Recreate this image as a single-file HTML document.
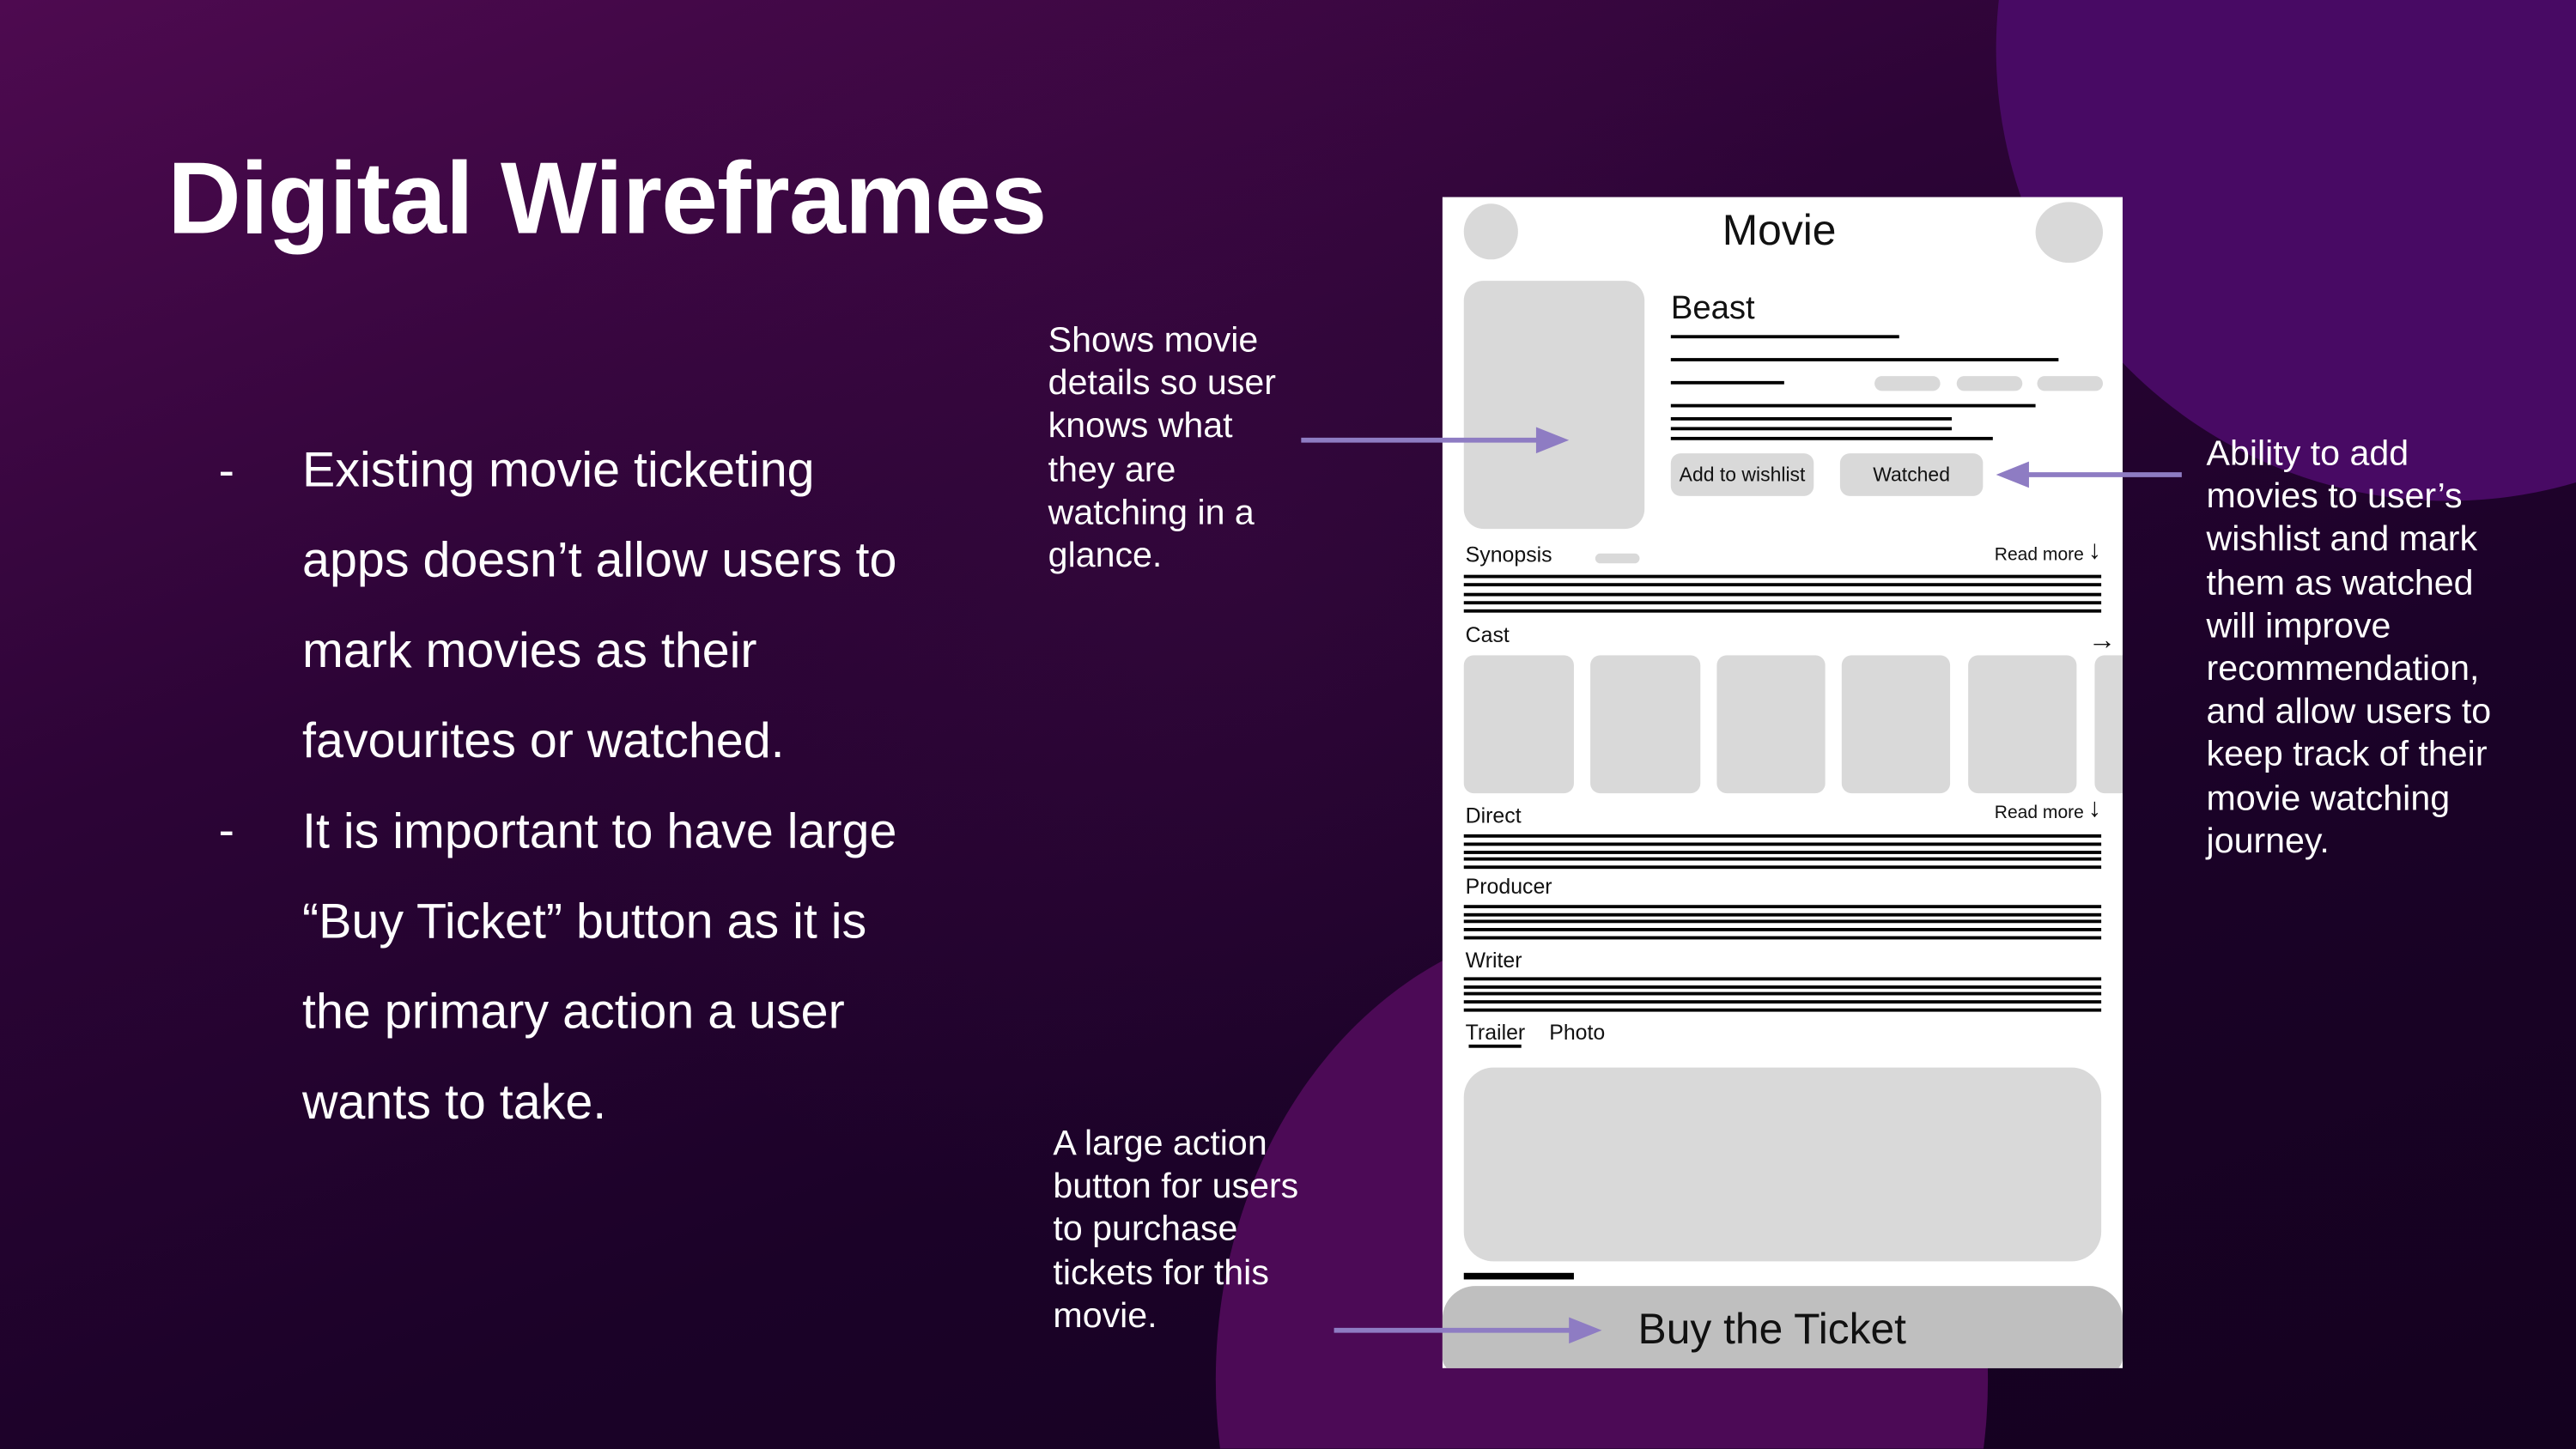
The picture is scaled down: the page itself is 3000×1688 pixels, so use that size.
<!DOCTYPE html>
<html><head><meta charset="utf-8"><style>
html,body{margin:0;padding:0;width:3000px;height:1688px;overflow:hidden;background:#1a0226}
#w{position:relative;width:3000px;height:1688px;overflow:hidden}
#s{position:absolute;left:0;top:0;width:1568px;height:882px;transform:scale(1.9133);transform-origin:0 0;overflow:hidden;
background:linear-gradient(160deg,#4e0a50 0%,#2c0436 35%,#1b0228 65%,#14011f 100%);font-family:"Liberation Sans",sans-serif;color:#fff}
.a{position:absolute}
.c{position:absolute;border-radius:50%}
.t{position:absolute;white-space:nowrap}
.ph{position:absolute;left:878px;top:120px;width:414px;height:713px;background:#fff;overflow:hidden;color:#111}
.ph .t{color:#111}
.g{position:absolute;background:#d9d9d9}
.l{position:absolute;height:1.6px;background:#000}
.note{position:absolute;font-size:21.5px;line-height:26.2px;color:#fff;white-space:nowrap}
.bl{position:absolute;font-size:30px;line-height:55px;color:#fff;white-space:nowrap}
</style></head><body><div id="w"><div id="s">
<div class="c" style="left:300px;top:-120px;width:900px;height:900px;background:radial-gradient(circle,rgba(90,20,90,0.18),rgba(0,0,0,0) 70%)"></div>
<div class="c" style="left:1215px;top:-245px;width:550px;height:550px;background:#480a64"></div>
<div class="c" style="left:740px;top:560px;width:470px;height:560px;background:#4c0a56"></div>

<div class="t" style="left:102px;top:84px;font-size:62px;font-weight:bold;letter-spacing:-0.5px;line-height:76px">Digital Wireframes</div>

<div class="t" style="left:133px;top:260px;font-size:29px;line-height:55px">-</div>
<div class="t" style="left:133px;top:479px;font-size:29px;line-height:55px">-</div>
<div class="bl" style="left:184px;top:259px;">Existing movie ticketing<br>apps doesn’t allow users to<br>mark movies as their<br>favourites or watched.<br>It is important to have large<br>“Buy Ticket” button as it is<br>the primary action a user<br>wants to take.</div>

<div class="note" style="left:638px;top:194px">Shows movie<br>details so user<br>knows what<br>they are<br>watching in a<br>glance.</div>
<div class="note" style="left:641px;top:683px">A large action<br>button for users<br>to purchase<br>tickets for this<br>movie.</div>
<div class="note" style="left:1343px;top:263px">Ability to add<br>movies to user’s<br>wishlist and mark<br>them as watched<br>will improve<br>recommendation,<br>and allow users to<br>keep track of their<br>movie watching<br>journey.</div>

<div class="ph">
 <div class="c" style="left:13px;top:4px;width:33px;height:34px;background:#d9d9d9"></div>
 <div class="c" style="left:361px;top:3px;width:41px;height:37px;background:#d9d9d9"></div>
 <div class="t" style="left:0;width:410px;text-align:center;top:3px;font-size:26px;line-height:34px">Movie</div>
 <div class="g" style="left:13px;top:51px;width:110px;height:151px;border-radius:12px"></div>
 <div class="t" style="left:139px;top:56px;font-size:20px;line-height:24px">Beast</div>
 <div class="l" style="left:139px;top:84px;width:139px"></div>
 <div class="l" style="left:139px;top:98px;width:236px"></div>
 <div class="l" style="left:139px;top:112px;width:69px"></div>
 <div class="g" style="left:263px;top:109px;width:40px;height:9px;border-radius:5px"></div>
 <div class="g" style="left:313px;top:109px;width:40px;height:9px;border-radius:5px"></div>
 <div class="g" style="left:362px;top:109px;width:40px;height:9px;border-radius:5px"></div>
 <div class="l" style="left:139px;top:126px;width:222px"></div>
 <div class="l" style="left:139px;top:134px;width:171px"></div>
 <div class="l" style="left:139px;top:140px;width:171px"></div>
 <div class="l" style="left:139px;top:146px;width:196px"></div>
 <div class="g" style="left:139px;top:156px;width:87px;height:26px;border-radius:6px"></div>
 <div class="t" style="left:139px;width:87px;text-align:center;top:162px;font-size:12px;line-height:14px">Add to wishlist</div>
 <div class="g" style="left:242px;top:156px;width:87px;height:26px;border-radius:6px"></div>
 <div class="t" style="left:242px;width:87px;text-align:center;top:162px;font-size:12px;line-height:14px">Watched</div>

 <div class="t" style="left:14px;top:210px;font-size:13px;line-height:16px">Synopsis</div>
 <div class="g" style="left:93px;top:217px;width:27px;height:6px;border-radius:3px"></div>
 <div class="t" style="left:336px;top:211px;font-size:11px;line-height:14px">Read more</div>
 <div class="t" style="left:393px;top:207px;font-size:16px;line-height:18px">↓</div>
 <div class="l" style="left:13px;top:230px;width:388px"></div>
 <div class="l" style="left:13px;top:235px;width:388px"></div>
 <div class="l" style="left:13px;top:241px;width:388px"></div>
 <div class="l" style="left:13px;top:246px;width:388px"></div>
 <div class="l" style="left:13px;top:251px;width:388px"></div>

 <div class="t" style="left:14px;top:259px;font-size:13px;line-height:16px">Cast</div>
 <div class="t" style="left:393px;top:261px;font-size:17px;line-height:18px">→</div>
 <div class="g" style="left:13px;top:279px;width:67px;height:84px;border-radius:6px"></div>
 <div class="g" style="left:90px;top:279px;width:67px;height:84px;border-radius:6px"></div>
 <div class="g" style="left:167px;top:279px;width:66px;height:84px;border-radius:6px"></div>
 <div class="g" style="left:243px;top:279px;width:66px;height:84px;border-radius:6px"></div>
 <div class="g" style="left:320px;top:279px;width:66px;height:84px;border-radius:6px"></div>
 <div class="g" style="left:397px;top:279px;width:30px;height:84px;border-radius:6px"></div>

 <div class="t" style="left:14px;top:369px;font-size:13px;line-height:16px">Direct</div>
 <div class="t" style="left:336px;top:368px;font-size:11px;line-height:14px">Read more</div>
 <div class="t" style="left:393px;top:364px;font-size:16px;line-height:18px">↓</div>
 <div class="l" style="left:13px;top:388px;width:388px"></div>
 <div class="l" style="left:13px;top:393px;width:388px"></div>
 <div class="l" style="left:13px;top:398px;width:388px"></div>
 <div class="l" style="left:13px;top:402px;width:388px"></div>
 <div class="l" style="left:13px;top:407px;width:388px"></div>

 <div class="t" style="left:14px;top:412px;font-size:13px;line-height:16px">Producer</div>
 <div class="l" style="left:13px;top:431px;width:388px"></div>
 <div class="l" style="left:13px;top:436px;width:388px"></div>
 <div class="l" style="left:13px;top:440px;width:388px"></div>
 <div class="l" style="left:13px;top:445px;width:388px"></div>
 <div class="l" style="left:13px;top:450px;width:388px"></div>

 <div class="t" style="left:14px;top:457px;font-size:13px;line-height:16px">Writer</div>
 <div class="l" style="left:13px;top:475px;width:388px"></div>
 <div class="l" style="left:13px;top:480px;width:388px"></div>
 <div class="l" style="left:13px;top:484px;width:388px"></div>
 <div class="l" style="left:13px;top:489px;width:388px"></div>
 <div class="l" style="left:13px;top:494px;width:388px"></div>

 <div class="t" style="left:14px;top:501px;font-size:13px;line-height:16px">Trailer</div>
 <div class="l" style="left:16px;top:516px;width:32px"></div>
 <div class="t" style="left:65px;top:501px;font-size:13px;line-height:16px">Photo</div>

 <div class="g" style="left:13px;top:530px;width:388px;height:118px;border-radius:18px"></div>
 <div class="a" style="left:13px;top:655px;width:67px;height:4px;background:#000"></div>
 <div class="a" style="left:0;top:663px;width:414px;height:52px;background:#bfbfbf;border-radius:20px 20px 8px 8px"></div>
 <div class="t" style="left:119px;top:672px;font-size:26px;line-height:34px">Buy the Ticket</div>
</div>

<svg class="a" style="left:0;top:0" width="1568" height="882">
 <g fill="#8e7cc3" stroke="#8e7cc3">
  <line x1="792" y1="268" x2="938" y2="268" stroke-width="3"/>
  <polygon points="935,260 955,268 935,276" stroke="none"/>
  <line x1="1328" y1="289" x2="1232" y2="289" stroke-width="3"/>
  <polygon points="1235,281 1215,289 1235,297" stroke="none"/>
  <line x1="812" y1="810" x2="958" y2="810" stroke-width="3"/>
  <polygon points="955,802 975,810 955,818" stroke="none"/>
 </g>
</svg>
</div></div></body></html>
